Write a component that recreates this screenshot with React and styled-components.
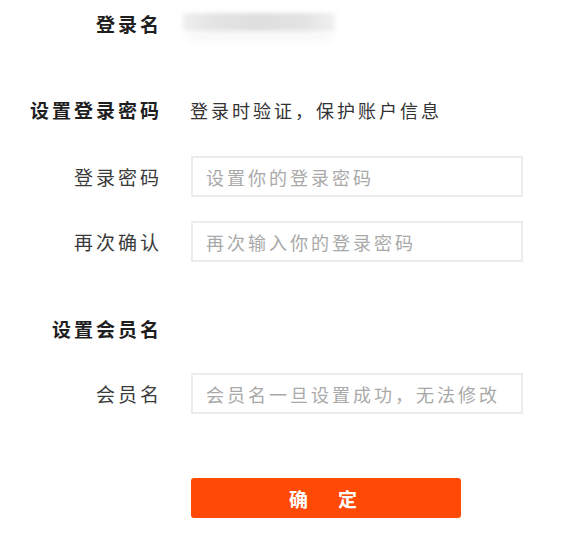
import React from "react";
import styled, { createGlobalStyle } from "styled-components";

const GlobalStyle = createGlobalStyle`
  html, body {
    margin: 0;
    padding: 0;
    background: #ffffff;
  }
  body {
    font-family: "Noto Sans CJK SC", "Noto Sans", sans-serif;
    color: #333;
  }
`;

const Form = styled.div`
  width: 578px;
  height: 535px;
  box-sizing: border-box;
  display: flex;
  flex-direction: column;
`;

const Row = styled.div`
  display: grid;
  grid-template-columns: 159px 1fr;
  column-gap: 32px;
  align-items: center;
  min-height: ${(p) => p.$height || 24}px;
  margin-top: ${(p) => p.$gap || 0}px;
`;

const Label = styled.div`
  justify-self: end;
  margin-right: -3px;
  font-size: 19px;
  line-height: 24px;
  letter-spacing: 3px;
  white-space: nowrap;
  font-weight: ${(p) => (p.$bold ? 700 : 400)};
  color: ${(p) => (p.$bold ? "#1f1f1f" : "#3a3a3a")};
`;

const Hint = styled.div`
  font-size: 18px;
  line-height: 24px;
  letter-spacing: 3px;
  color: #333;
  white-space: nowrap;
  margin-left: -1px;
`;

const Blurred = styled.div`
  width: 152px;
  height: 18px;
  margin-left: -8px;
  margin-top: -4px;
  background: linear-gradient(
    to right,
    #efefef 0%,
    #e4e4e4 18%,
    #dedede 50%,
    #e3e3e3 80%,
    #f1f1f1 100%
  );
  filter: blur(2px);
  box-shadow: 0 14px 8px -4px rgba(0, 0, 0, 0.035);
`;

const Input = styled.input`
  width: 332px;
  height: 41px;
  box-sizing: border-box;
  border: 2px solid #ececec;
  outline: none;
  padding: 0 0 0 13px;
  font-family: "Noto Sans CJK SC", "Noto Sans", sans-serif;
  font-size: 18px;
  letter-spacing: 3px;
  color: #333;
  background: #fff;

  &::placeholder {
    color: #a9a9a9;
  }
`;

const Submit = styled.button`
  width: 270px;
  height: 40px;
  border: none;
  border-radius: 3px;
  background: #ff4a06;
  color: #fff;
  font-family: "Noto Sans CJK SC", "Noto Sans", sans-serif;
  font-size: 19px;
  font-weight: 700;
  letter-spacing: 30px;
  padding-left: 30px;
  cursor: pointer;
`;

export default function App() {
  return (
    <>
      <GlobalStyle />
      <Form>
        <Row $height={48}>
          <Label $bold>登录名</Label>
          <Blurred />
        </Row>

        <Row $gap={50}>
          <Label $bold>设置登录密码</Label>
          <Hint>登录时验证，保护账户信息</Hint>
        </Row>

        <Row $gap={34} $height={41}>
          <Label>登录密码</Label>
          <Input type="password" placeholder="设置你的登录密码" />
        </Row>

        <Row $gap={24} $height={41}>
          <Label>再次确认</Label>
          <Input type="password" placeholder="再次输入你的登录密码" />
        </Row>

        <Row $gap={55}>
          <Label $bold>设置会员名</Label>
        </Row>

        <Row $gap={32} $height={41}>
          <Label>会员名</Label>
          <Input type="text" placeholder="会员名一旦设置成功，无法修改" />
        </Row>

        <Row $gap={64} $height={40}>
          <span />
          <Submit type="button">确定</Submit>
        </Row>
      </Form>
    </>
  );
}
